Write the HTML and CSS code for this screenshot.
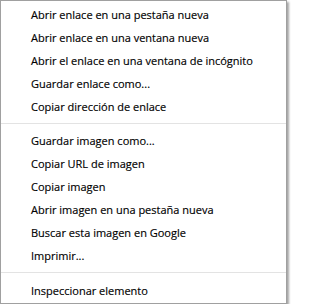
FILE: index.html
```html
<!DOCTYPE html>
<html lang="es">
<head>
<meta charset="utf-8">
<link rel="stylesheet" href="styles.css">
</head>
<body>
<div class="menu">
  <div class="item">Abrir enlace en una pestaña nueva</div>
  <div class="item">Abrir enlace en una ventana nueva</div>
  <div class="item">Abrir el enlace en una ventana de incógnito</div>
  <div class="item">Guardar enlace como...</div>
  <div class="item">Copiar dirección de enlace</div>
  <div class="sep"></div>
  <div class="item">Guardar imagen como...</div>
  <div class="item">Copiar URL de imagen</div>
  <div class="item">Copiar imagen</div>
  <div class="item">Abrir imagen en una pestaña nueva</div>
  <div class="item">Buscar esta imagen en Google</div>
  <div class="item">Imprimir...</div>
  <div class="sep sep-last"></div>
  <div class="item">Inspeccionar elemento</div>
</div>
</body>
</html>
```
FILE: styles.css
```css
html, body {
  margin: 0;
  padding: 0;
  background: #ffffff;
}
.menu {
  box-sizing: border-box;
  width: 287px;
  padding: 2px 0 1px 0;
  background: #ffffff;
  border: 1px solid #a0a0a0;
  box-shadow: 2px 2px 2px rgba(0, 0, 0, 0.35);
  font-family: "Open Sans", "Noto Sans", sans-serif;
  font-size: 11px;
  color: #000000;
  -webkit-text-stroke: 0.15px #000000;
}
.item {
  height: 23px;
  line-height: 23px;
  padding-left: 30px;
  white-space: nowrap;
}
.sep {
  height: 1px;
  background: #e3e3e3;
  margin: 5px 0 5px 0;
}
.sep-last {
  margin-bottom: 6px;
}
```
